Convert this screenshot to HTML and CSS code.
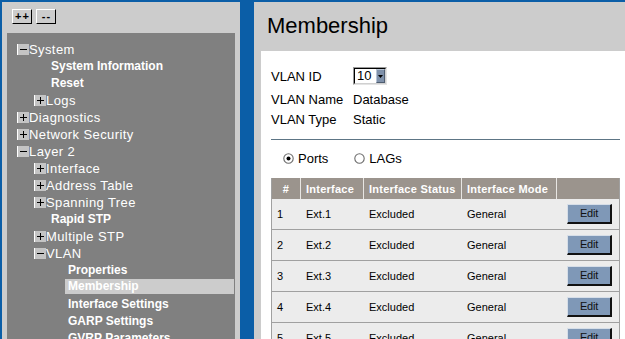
FILE: index.html
```html
<!DOCTYPE html>
<html>
<head>
<meta charset="utf-8">
<link rel="stylesheet" href="styles.css">
</head>
<body>
<div class="left">
  <div class="toolbar">
    <span class="tbtn">++</span>
    <span class="tbtn">--</span>
  </div>
  <div class="tree">
    <div class="node l0"><svg class="exp" viewBox="0 0 12 11"><rect x="1" y="0" width="11" height="11" fill="#c4c4c4"/><line x1="0.5" y1="0" x2="0.5" y2="11" stroke="#fff"/><line x1="3" y1="5.5" x2="10" y2="5.5" stroke="#000"/></svg>System</div>
    <div class="leaf l1">System Information</div>
    <div class="leaf l1">Reset</div>
    <div class="node l1"><svg class="exp" viewBox="0 0 12 11"><rect x="1" y="0" width="11" height="11" fill="#c4c4c4"/><line x1="0.5" y1="0" x2="0.5" y2="11" stroke="#fff"/><line x1="3" y1="5.5" x2="10" y2="5.5" stroke="#000"/><line x1="6.5" y1="2" x2="6.5" y2="9" stroke="#000"/></svg>Logs</div>
    <div class="node l0"><svg class="exp" viewBox="0 0 12 11"><rect x="1" y="0" width="11" height="11" fill="#c4c4c4"/><line x1="0.5" y1="0" x2="0.5" y2="11" stroke="#fff"/><line x1="3" y1="5.5" x2="10" y2="5.5" stroke="#000"/><line x1="6.5" y1="2" x2="6.5" y2="9" stroke="#000"/></svg>Diagnostics</div>
    <div class="node l0"><svg class="exp" viewBox="0 0 12 11"><rect x="1" y="0" width="11" height="11" fill="#c4c4c4"/><line x1="0.5" y1="0" x2="0.5" y2="11" stroke="#fff"/><line x1="3" y1="5.5" x2="10" y2="5.5" stroke="#000"/><line x1="6.5" y1="2" x2="6.5" y2="9" stroke="#000"/></svg>Network Security</div>
    <div class="node l0"><svg class="exp" viewBox="0 0 12 11"><rect x="1" y="0" width="11" height="11" fill="#c4c4c4"/><line x1="0.5" y1="0" x2="0.5" y2="11" stroke="#fff"/><line x1="3" y1="5.5" x2="10" y2="5.5" stroke="#000"/></svg>Layer 2</div>
    <div class="node l1"><svg class="exp" viewBox="0 0 12 11"><rect x="1" y="0" width="11" height="11" fill="#c4c4c4"/><line x1="0.5" y1="0" x2="0.5" y2="11" stroke="#fff"/><line x1="3" y1="5.5" x2="10" y2="5.5" stroke="#000"/><line x1="6.5" y1="2" x2="6.5" y2="9" stroke="#000"/></svg>Interface</div>
    <div class="node l1"><svg class="exp" viewBox="0 0 12 11"><rect x="1" y="0" width="11" height="11" fill="#c4c4c4"/><line x1="0.5" y1="0" x2="0.5" y2="11" stroke="#fff"/><line x1="3" y1="5.5" x2="10" y2="5.5" stroke="#000"/><line x1="6.5" y1="2" x2="6.5" y2="9" stroke="#000"/></svg>Address Table</div>
    <div class="node l1"><svg class="exp" viewBox="0 0 12 11"><rect x="1" y="0" width="11" height="11" fill="#c4c4c4"/><line x1="0.5" y1="0" x2="0.5" y2="11" stroke="#fff"/><line x1="3" y1="5.5" x2="10" y2="5.5" stroke="#000"/><line x1="6.5" y1="2" x2="6.5" y2="9" stroke="#000"/></svg>Spanning Tree</div>
    <div class="leaf l1">Rapid STP</div>
    <div class="node l1"><svg class="exp" viewBox="0 0 12 11"><rect x="1" y="0" width="11" height="11" fill="#c4c4c4"/><line x1="0.5" y1="0" x2="0.5" y2="11" stroke="#fff"/><line x1="3" y1="5.5" x2="10" y2="5.5" stroke="#000"/><line x1="6.5" y1="2" x2="6.5" y2="9" stroke="#000"/></svg>Multiple STP</div>
    <div class="node l1"><svg class="exp" viewBox="0 0 12 11"><rect x="1" y="0" width="11" height="11" fill="#c4c4c4"/><line x1="0.5" y1="0" x2="0.5" y2="11" stroke="#fff"/><line x1="3" y1="5.5" x2="10" y2="5.5" stroke="#000"/></svg>VLAN</div>
    <div class="leaf l2">Properties</div>
    <div class="leaf l2 sel">Membership</div>
    <div class="leaf l2">Interface Settings</div>
    <div class="leaf l2">GARP Settings</div>
    <div class="leaf l2">GVRP Parameters</div>
  </div>
</div>
<div class="right">
  <div class="header">Membership</div>
  <div class="panel">
    <div class="frow r1">
      <span class="lbl">VLAN ID</span>
      <span class="select"><span class="sinner"><span class="sval">10</span><span class="sarrow"><svg viewBox="0 0 7 4" class="tri"><polygon points="0,0 7,0 3.5,4" fill="#000"/></svg></span></span></span>
    </div>
    <div class="frow r2"><span class="lbl">VLAN Name</span><span>Database</span></div>
    <div class="frow r3"><span class="lbl">VLAN Type</span><span>Static</span></div>
    <div class="rule"></div>
    <div class="radios">
      <span class="radio"><svg class="rad" viewBox="0 0 11 11"><circle cx="5.5" cy="5.5" r="4.7" fill="#fff" stroke="#6e6e6e" stroke-width="1.1"/><circle cx="5.5" cy="5.5" r="2" fill="#000"/></svg>Ports</span>
      <span class="radio"><svg class="rad" viewBox="0 0 11 11"><circle cx="5.5" cy="5.5" r="4.7" fill="#fff" stroke="#6e6e6e" stroke-width="1.1"/></svg>LAGs</span>
    </div>
    <div class="tbl">
      <div class="trow thead">
        <div class="c c1">#</div>
        <div class="c">Interface</div>
        <div class="c">Interface Status</div>
        <div class="c">Interface Mode</div>
        <div class="c"></div>
      </div>
      <div class="trow">
        <div class="c">1</div><div class="c">Ext.1</div><div class="c">Excluded</div><div class="c">General</div><div class="c cb"><span class="edit">Edit</span></div>
      </div>
      <div class="trow">
        <div class="c">2</div><div class="c">Ext.2</div><div class="c">Excluded</div><div class="c">General</div><div class="c cb"><span class="edit">Edit</span></div>
      </div>
      <div class="trow">
        <div class="c">3</div><div class="c">Ext.3</div><div class="c">Excluded</div><div class="c">General</div><div class="c cb"><span class="edit">Edit</span></div>
      </div>
      <div class="trow">
        <div class="c">4</div><div class="c">Ext.4</div><div class="c">Excluded</div><div class="c">General</div><div class="c cb"><span class="edit">Edit</span></div>
      </div>
      <div class="trow">
        <div class="c">5</div><div class="c">Ext.5</div><div class="c">Excluded</div><div class="c">General</div><div class="c cb"><span class="edit">Edit</span></div>
      </div>
    </div>
  </div>
</div>
</body>
</html>
```
FILE: styles.css
```css
html, body {
  margin: 0;
  height: 100%;
  overflow: hidden;
}
body {
  background: #0b5ea7;
  display: flex;
  gap: 14px;
  padding: 2px 0 0 2px;
  box-sizing: border-box;
  font-family: "Liberation Sans", Arial, sans-serif;
}
.left {
  width: 238px;
  flex: none;
  background: #cccccc;
  padding: 7px 5px 0 5px;
  box-sizing: border-box;
  display: flex;
  flex-direction: column;
  min-height: 0;
}
.toolbar {
  display: flex;
  gap: 4px;
  padding-left: 5px;
  height: 15px;
  flex: none;
}
.tbtn {
  width: 20px;
  height: 15px;
  box-sizing: border-box;
  border: 1px solid;
  border-color: #fff #000 #000 #fff;
  background: #cccccc;
  font-size: 11px;
  font-weight: bold;
  line-height: 12px;
  text-align: center;
  color: #000;
  letter-spacing: 1px;
  padding-left: 1px;
}
.tree {
  margin-top: 9px;
  flex: 1;
  min-height: 0;
  background: #808080;
  padding: 8px 0 0 10px;
  color: #fff;
  overflow: hidden;
}
.node {
  height: 17px;
  line-height: 17px;
  font-size: 13px;
  letter-spacing: 0.4px;
  display: flex;
  align-items: flex-start;
  white-space: nowrap;
}
.exp {
  width: 12px;
  height: 11px;
  margin-top: 3px;
  flex: none;
}
.node.l1 { padding-left: 17px; }
.leaf {
  height: 15px;
  line-height: 17px;
  margin-bottom: 2px;
  font-size: 12px;
  font-weight: bold;
  white-space: nowrap;
}
.leaf.l1 { padding-left: 34px; }
.leaf.l2 { margin-left: 48px; padding-left: 3px; margin-right: 1px; }
.leaf.sel { background: #cccccc; line-height: 15px; }

.right {
  flex: 1;
  min-height: 0;
  background: #cccccc;
  display: flex;
  flex-direction: column;
  padding-left: 7px;
}
.header {
  flex: none;
  height: 49px;
  box-sizing: border-box;
  padding: 11px 0 0 6px;
  font-size: 22px;
  color: #000;
  line-height: 25px;
}
.panel {
  flex: 1;
  min-height: 0;
  overflow: hidden;
  background: #fff;
  padding: 15px 6px 0 10px;
  font-size: 13px;
  color: #000;
}
.frow {
  display: flex;
  align-items: center;
  height: 20px;
}
.r1 { margin-bottom: 3px; }
.lbl { width: 82px; flex: none; }
.select {
  display: inline-block;
  border: 1px solid;
  border-color: #9a9a9a #e4e4e4 #e4e4e4 #9a9a9a;
  height: 18px;
  box-sizing: border-box;
}
.sinner {
  display: flex;
  align-items: center;
  height: 16px;
  box-sizing: border-box;
  border: 1px solid;
  border-color: #000 #d0d0d0 #d0d0d0 #000;
  background: #fff;
  width: 32px;
}
.sval { padding-left: 2px; width: 21px; line-height: 14px; }
.sarrow {
  width: 8px;
  height: 12px;
  background: #7f91aa;
  border: 1px solid;
  border-color: #b8c4d4 #4f5d70 #4f5d70 #b8c4d4;
  display: flex;
  align-items: center;
  justify-content: center;
}
.tri { width: 5px; height: 3px; }
.rule {
  margin-top: 10px;
  height: 1px;
  background: #5d7585;
}
.radios {
  margin-top: 8px;
  height: 20px;
  display: flex;
  align-items: center;
  padding-left: 12px;
  gap: 26px;
}
.radio { display: flex; align-items: center; }
.rad { width: 11px; height: 11px; margin-right: 4px; }
.tbl {
  margin-top: 10px;
  width: 349px;
  box-sizing: border-box;
  border-left: 1px solid #a0a0a0;
  border-right: 1px solid #a0a0a0;
  font-size: 11px;
}
.trow {
  display: grid;
  grid-template-columns: 28px 63px 98px 95px 1fr;
  height: 31px;
  background: #ececec;
  border-bottom: 1px solid #a0a0a0;
  box-sizing: border-box;
}
.thead {
  height: 21px;
  background: #9b948d;
  border-bottom: none;
  color: #fff;
  font-weight: bold;
  letter-spacing: 0.25px;
}
.c {
  display: flex;
  align-items: center;
  padding-left: 5px;
  border-left: 1px solid transparent;
  white-space: nowrap;
  overflow: hidden;
}
.c:first-child { border-left: none; }
.thead .c { border-left-color: #e8e6e3; }
.thead .c:first-child { border-left: none; }
.thead .c1 { justify-content: center; padding-left: 0; }
.cb { justify-content: flex-end; padding-right: 7px; }
.edit {
  width: 45px;
  height: 20px;
  box-sizing: border-box;
  background: #7f98b7;
  border: 1px solid;
  border-width: 1px 2px 2px 1px;
  border-color: #d6dee8 #111 #111 #d6dee8;
  color: #111;
  font-size: 11px;
  text-align: center;
  line-height: 17px;
  letter-spacing: -0.2px;
}
```
